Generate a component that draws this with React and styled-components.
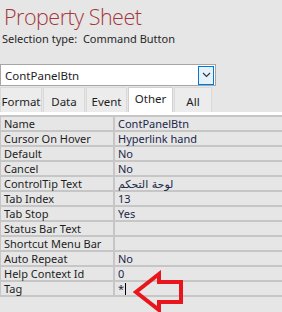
import React from 'react';
import styled, { createGlobalStyle } from 'styled-components';

const GlobalStyle = createGlobalStyle`
    body {
        margin: 0;
        background: #e6e6e6;
        font-family: "Noto Sans", "Open Sans", sans-serif;
    }
`

const Sheet = styled.div`
    position: relative;
    width: 282px;
    height: 312px;
    overflow: hidden;
    background: #e6e6e6;
`

const Header = styled.div`
    padding: 0 0 0 4px;
`

const Title = styled.h1`
    margin: 0;
    padding-top: 2px;
    font-family: "Open Sans", "Noto Sans", sans-serif;
    font-weight: 300;
    font-size: 21.5px;
    letter-spacing: -0.5px;
    line-height: 29px;
    color: #a4373a;
`

const Selection = styled.div`
    margin-left: -2px;
    font-size: 11px;
    line-height: 16px;
    color: #262626;
    white-space: pre;
`

const Combo = styled.div`
    display: flex;
    align-items: center;
    justify-content: space-between;
    margin-top: 17px;
    width: 213px;
    height: 20px;
    padding: 0 1px 0 0;
    border: 1px solid #a6a6a6;
    background: #fff;
`

const ComboText = styled.span`
    padding-left: 4px;
    font-size: 11.5px;
    color: #1e1e1e;
`

const ComboButton = styled.div`
    display: flex;
    align-items: center;
    justify-content: center;
    width: 16px;
    height: 19px;
    border: 1px solid #0078d7;
    background: #e5f1fb;
    box-sizing: border-box;
`

const Tabs = styled.div`
    display: flex;
    margin-top: 1px;
    height: 25px;
`

const Tab = styled.div`
    display: flex;
    justify-content: center;
    align-items: ${props => props.active ? 'flex-start' : 'center'};
    padding-top: ${props => props.active ? '3px' : '2px'};
    box-sizing: border-box;
    width: ${props => props.w}px;
    margin-right: 1px;
    height: 25px;
    border: 1px solid ${props => props.active ? '#d0d0d0' : '#dadada'};
    border-bottom: none;
    background: ${props => props.active ? '#fff' : '#ececec'};
    font-size: 11.5px;
    color: #1e1e1e;
`

const Strip = styled.div`
    height: 3px;
    background: #fff;
`

const Grid = styled.div`
    display: grid;
    grid-template-columns: 114px 1fr;
    border-top: 2px solid #c6c6c6;
    border-left: 1px solid #c6c6c6;
`

const Cell = styled.div`
    position: relative;
    height: 13px;
    line-height: 13px;
    padding-left: 3px;
    border-bottom: 2px solid #c6c6c6;
    border-right: ${props => props.value ? 'none' : '2px solid #c6c6c6'};
    background: #e6e6e6;
    font-size: 11px;
    color: ${props => props.value ? '#20274a' : '#1e1e1e'};
    white-space: nowrap;
`

const Caret = styled.span`
    display: inline-block;
    width: 1px;
    height: 12px;
    margin-left: 1px;
    vertical-align: -2px;
    background: #000;
`

const Arrow = styled.svg`
    position: absolute;
    left: 133px;
    top: 270px;
`

const rows = [
    ['Name', 'ContPanelBtn'],
    ['Cursor On Hover', 'Hyperlink hand'],
    ['Default', 'No'],
    ['Cancel', 'No'],
    ['ControlTip Text', 'لوحة التحكم'],
    ['Tab Index', '13'],
    ['Tab Stop', 'Yes'],
    ['Status Bar Text', ''],
    ['Shortcut Menu Bar', ''],
    ['Auto Repeat', 'No'],
    ['Help Context Id', '0'],
    ['Tag', '*'],
]

const tabs = [
    ['Format', 42],
    ['Data', 42],
    ['Event', 41],
    ['Other', 45],
    ['All', 38],
]

function App() {
    return (
        <Sheet>
            <GlobalStyle />
            <Header>
                <Title>Property Sheet</Title>
                <Selection>Selection type:  Command Button</Selection>
            </Header>
            <Combo>
                <ComboText>ContPanelBtn</ComboText>
                <ComboButton>
                    <svg width="9" height="6" viewBox="0 0 9 6">
                        <path d="M1 1 L4.5 4.5 L8 1" fill="none" stroke="#333" strokeWidth="1.1" />
                    </svg>
                </ComboButton>
            </Combo>
            <Tabs>
                {tabs.map(([label, w]) => (
                    <Tab key={label} w={w} active={label === 'Other'}>{label}</Tab>
                ))}
            </Tabs>
            <Strip />
            <Grid>
                {rows.map(([label, val]) => (
                    <React.Fragment key={label}>
                        <Cell>{label}</Cell>
                        <Cell value>
                            {label === 'ControlTip Text'
                                ? <span dir="rtl" style={{ fontFamily: '"DejaVu Sans", "Noto Sans", sans-serif' }}>{val}</span>
                                : val}
                            {label === 'Tag' && <Caret />}
                        </Cell>
                    </React.Fragment>
                ))}
            </Grid>
            <Arrow width="52" height="44" viewBox="0 0 52 44">
                <path
                    d="M3 22 L26 4 L26 12 L48 12 L48 32 L26 32 L26 40 Z"
                    fill="none"
                    stroke="#e8151d"
                    strokeWidth="4"
                    strokeLinejoin="miter"
                />
            </Arrow>
        </Sheet>
    )
}

export default App;
